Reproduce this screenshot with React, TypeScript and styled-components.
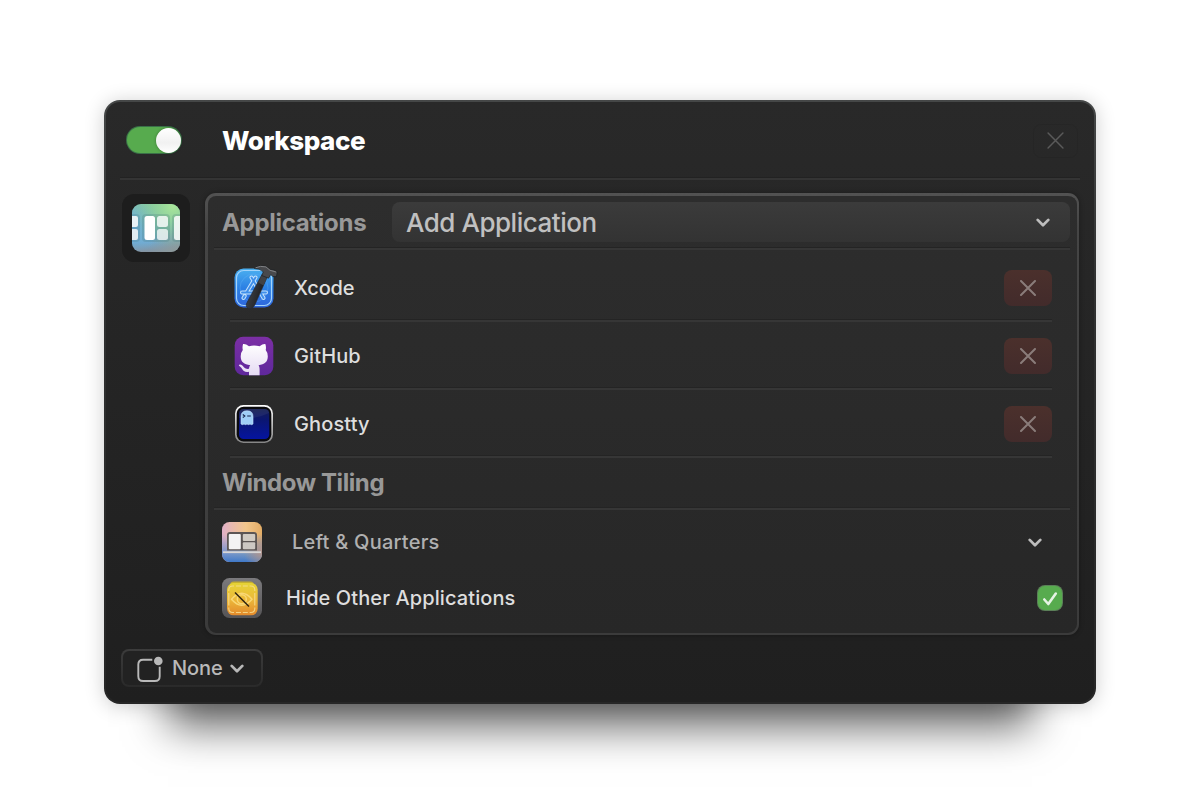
import React from 'react';
import styled, { createGlobalStyle } from 'styled-components';

const GlobalStyle = createGlobalStyle`
  *, *::before, *::after { box-sizing: border-box; }
  html, body { margin: 0; padding: 0; background: #fff; }
  body {
    font-family: Inter, 'Liberation Sans', sans-serif;
    -webkit-font-smoothing: antialiased;
  }
  button { font: inherit; border: 0; padding: 0; background: none; color: inherit; }
  svg { display: block; flex: none; }
`;

const Page = styled.main`
  height: 804px;
  padding: 100px 104px;
  overflow: hidden;
  background: #fff;
`;

const Window = styled.section`
  width: 992px;
  height: 604px;
  padding: 0 14px;
  display: flex;
  flex-direction: column;
  border: 2px solid transparent;
  border-radius: 16px;
  background:
    linear-gradient(#292929, #1f1f1f) padding-box,
    linear-gradient(#454747, #303131 30%, #262626) border-box;
  box-shadow:
    0 2px 20px rgba(0, 0, 0, 0.2),
    0 87px 40px -64px rgba(0, 0, 0, 0.6);
`;

const Header = styled.header`
  height: 78px;
  padding: 0 2px 0 7px;
  display: flex;
  align-items: center;
  border-bottom: 2px solid #343434;
  box-shadow: inset 0 -1px #222;
`;

const Switch = styled.button`
  width: 54px;
  height: 26px;
  display: flex;
  justify-content: flex-end;
  align-items: center;
  border-radius: 13px;
  background: #57ab4e;
  box-shadow: 0 0 0 1px #3a7048;
`;

const Knob = styled.span`
  width: 25px;
  height: 25px;
  border-radius: 50%;
  background: linear-gradient(#fff, #f1f1f1 60%, #fff);
  box-shadow: 0 0 3px rgba(0, 0, 0, 0.35);
`;

const Title = styled.h1`
  flex: 1;
  margin: 2px 0 0 41px;
  font-size: 26px;
  line-height: 32px;
  font-weight: 770;
  color: #fff;
  letter-spacing: -0.45px;
`;

const CloseButton = styled.button`
  width: 45px;
  height: 34px;
  margin-top: 1px;
  display: grid;
  place-items: center;
  border-radius: 8px;
  box-shadow: inset 0 0 0 1px rgba(0, 0, 0, 0.05);
`;

const Body = styled.div`
  display: flex;
  gap: 15px;
  padding: 13px 1px 0 2px;
`;

const Thumbnail = styled.div`
  width: 68px;
  height: 68px;
  margin-top: 1px;
  display: grid;
  place-items: center;
  border-radius: 12px;
  background: #1d1d1d;
`;

const Panel = styled.div`
  width: 874px;
  height: 442px;
  padding: 0 7px 0 6px;
  border: solid transparent;
  border-width: 3px 2px 2px 3px;
  border-radius: 11px;
  background:
    linear-gradient(#2d2d2d, #272727) padding-box,
    linear-gradient(#525252, #454545 8%, #3b3b3b) border-box;
  box-shadow: 0 0 5px rgba(0, 0, 0, 0.35);
`;

const PanelHeader = styled.div<{ $height: number }>`
  height: ${(p) => p.$height}px;
  padding-left: 8px;
  display: flex;
  align-items: center;
  border-bottom: 2px solid #363636;
  box-shadow: inset 0 -1px #242424;
`;

const Heading = styled.h2<{ $spacing: string; $top?: number }>`
  margin: ${(p) => p.$top ?? 0}px 0 0;
  font-size: 24px;
  line-height: 30px;
  font-weight: 650;
  color: #989898;
  letter-spacing: ${(p) => p.$spacing};
`;

const Select = styled.button`
  width: 678px;
  height: 40px;
  margin-left: auto;
  padding: 0 20px 0 14px;
  display: flex;
  align-items: center;
  justify-content: space-between;
  border-radius: 8px;
  background: linear-gradient(#3b3b3b, #333);
  font-size: 26px;
  font-weight: 450;
  letter-spacing: -0.47px;
  color: #c0c0c0;
`;

const AppList = styled.ul`
  margin: 4px 18px 0 16px;
  padding: 0;
  list-style: none;
`;

const AppRow = styled.li`
  height: 68px;
  padding-top: 2px;
  display: flex;
  align-items: center;
  gap: 16px;
  border-bottom: 2px solid #363636;
  box-shadow: inset 0 -1px #242424;
`;

const Label = styled.span<{ $color?: string; $spacing?: string }>`
  flex: 1;
  font-size: 20px;
  line-height: 26px;
  font-weight: 500;
  color: ${(p) => p.$color ?? '#dedede'};
  letter-spacing: ${(p) => p.$spacing ?? '0'};
`;

const RemoveButton = styled.button`
  width: 48px;
  height: 36px;
  display: grid;
  place-items: center;
  border-radius: 8px;
  background: linear-gradient(#4b302c, #422b2b);
`;

const Options = styled.div`
  padding: 4px 0 0 8px;
`;

const OptionRow = styled.div<{ $gap: number; $end: number }>`
  height: 56px;
  padding-right: ${(p) => p.$end}px;
  display: flex;
  align-items: center;
  gap: ${(p) => p.$gap}px;
`;

const Checkbox = styled.span`
  width: 24px;
  height: 24px;
  display: grid;
  place-items: center;
  border-radius: 7px;
  background: #57ab4e;
  box-shadow: 0 0 0 1px #5b7f58;
`;

const Shortcut = styled.button`
  width: 142px;
  height: 38px;
  margin: 14px 0 0 1px;
  padding: 0 17px 0 14px;
  display: flex;
  align-items: center;
  border: 2px solid transparent;
  border-radius: 8px;
  background:
    linear-gradient(#222, #222) padding-box,
    linear-gradient(#3c3c3c, #2a2a2a) border-box;
`;

const ShortcutText = styled.span`
  margin: 0 auto 0 9px;
  font-size: 20px;
  font-weight: 500;
  letter-spacing: -0.1px;
  color: #b9b9b9;
`;

const Chevron = ({ color = '#bdbdbd' }: { color?: string }) => (
  <svg width="14" height="10" viewBox="0 0 14 10">
    <path d="M1.7 2.9 7 8.2 12.3 2.9" fill="none" stroke={color} strokeWidth="2.7" strokeLinecap="round" strokeLinejoin="round" />
  </svg>
);

const Cross = ({ size, color, weight }: { size: number; color: string; weight: number }) => (
  <svg width={size} height={size} viewBox="0 0 16 16">
    <path d="M1 1 15 15M15 1 1 15" fill="none" stroke={color} strokeWidth={weight} strokeLinecap="round" />
  </svg>
);

const WorkspaceIcon = () => (
  <svg width="48" height="48" viewBox="0 0 48 48">
    <defs>
      <linearGradient id="wsBase" x1="0" y1="0" x2="0" y2="1">
        <stop offset="0" stopColor="#85c7a8" />
        <stop offset=".55" stopColor="#76b8bd" />
        <stop offset=".8" stopColor="#72abcf" />
        <stop offset="1" stopColor="#8593a0" />
      </linearGradient>
      <radialGradient id="wsGreen" cx=".85" cy=".05" r=".85">
        <stop offset="0" stopColor="#a9e69a" />
        <stop offset="1" stopColor="#83c98b" stopOpacity="0" />
      </radialGradient>
      <radialGradient id="wsBlue" cx="0" cy=".45" r=".6">
        <stop offset="0" stopColor="#6eaedb" />
        <stop offset="1" stopColor="#6eaedb" stopOpacity="0" />
      </radialGradient>
      <radialGradient id="wsGray" cx="1" cy="1" r=".65">
        <stop offset="0" stopColor="#8f9a98" />
        <stop offset="1" stopColor="#8f9a98" stopOpacity="0" />
      </radialGradient>
      <clipPath id="wsClip"><rect width="48" height="48" rx="9" /></clipPath>
    </defs>
    <g clipPath="url(#wsClip)">
      <rect width="48" height="48" fill="url(#wsBase)" />
      <rect width="48" height="48" fill="url(#wsBlue)" />
      <rect width="48" height="48" fill="url(#wsGray)" />
      <rect width="48" height="48" fill="url(#wsGreen)" />
      <g fill="#43707a" opacity=".22">
        <rect x="-10" y="10" width="18" height="28" rx="4" />
        <rect x="10" y="10" width="28" height="28" rx="4" />
        <rect x="40" y="10" width="18" height="28" rx="4" />
      </g>
      <g fill="#fff">
        <rect x="-6" y="12" width="12" height="11" rx="2" opacity=".85" />
        <rect x="-6" y="25" width="12" height="11" rx="2" opacity=".8" />
        <rect x="12.5" y="12" width="10.5" height="24" rx="2.5" />
        <rect x="25" y="12" width="11" height="11" rx="2.5" opacity=".8" />
        <rect x="25" y="25" width="11" height="11" rx="2.5" opacity=".75" />
        <rect x="42" y="12" width="12" height="24" rx="2.5" opacity=".85" />
      </g>
    </g>
  </svg>
);

const XcodeIcon = () => (
  <svg width="48" height="48" viewBox="0 0 48 48">
    <defs>
      <linearGradient id="xcBase" x1="0" y1="0" x2="0" y2="1">
        <stop offset="0" stopColor="#4bb0f0" />
        <stop offset=".5" stopColor="#2b80e4" />
        <stop offset="1" stopColor="#2f66dc" />
      </linearGradient>
      <linearGradient id="xcHandle" x1="0" y1="0" x2="1" y2=".4">
        <stop offset="0" stopColor="#4a4d52" />
        <stop offset="1" stopColor="#17181a" />
      </linearGradient>
    </defs>
    <rect x="4.5" y="4.5" width="39" height="39" rx="9" fill="url(#xcBase)" />
    <rect x="6.5" y="6.5" width="35" height="35" rx="7.2" fill="none" stroke="#a3d4fb" strokeWidth="1.2" />
    <circle cx="24" cy="24" r="14" fill="none" stroke="#68b7f8" strokeWidth=".6" opacity=".6" />
    <g fill="none" strokeLinecap="round" strokeLinejoin="round">
      <g stroke="#c3e1fc" strokeWidth="4">
        <path d="M21.5 13.5 33.5 34M25.5 13.5 16.5 28.5M12 28.5H36M13.5 34 14.7 32" />
      </g>
      <g stroke="#3f8fea" strokeWidth="1.9">
        <path d="M21.5 13.5 33.5 34M25.5 13.5 16.5 28.5M12 28.5H36M13.5 34 14.7 32" />
      </g>
    </g>
    <path d="M32 10.5 37.3 12.8 25 40.5Q22.5 46 18.3 44.4 14.8 42.5 17.3 38Z" fill="url(#xcHandle)" stroke="#232a36" strokeWidth=".7" />
    <path d="M32 10.5 37.3 12.8 33.5 21.5 28.4 18.5Z" fill="#404245" />
    <path d="M24.5 4.5Q28 .8 36 2.2L40.5 5.8 43 5.5 47.5 7.8 46.3 12.6 42.8 12.6 40.8 10.5 38.5 14.2 31.8 11.5 33.3 7.8Q29.5 4.3 24.5 4.5Z" fill="#48494c" stroke="#1d1f22" strokeWidth=".7" />
    <path d="M25.5 3.8Q30 1.4 36 2.9L40 6.3 46 8" fill="none" stroke="#88898c" strokeWidth=".9" />
  </svg>
);

const GitHubIcon = () => (
  <svg width="48" height="48" viewBox="0 0 48 48">
    <defs>
      <linearGradient id="ghBase" x1="0" y1="0" x2="0" y2="1">
        <stop offset="0" stopColor="#7c2fa5" />
        <stop offset="1" stopColor="#5f289c" />
      </linearGradient>
      <linearGradient id="ghCat" x1="0" y1="0" x2="0" y2="1">
        <stop offset="0" stopColor="#fff" />
        <stop offset="1" stopColor="#e5daf3" />
      </linearGradient>
    </defs>
    <rect x="4.7" y="4.7" width="38.6" height="38.6" rx="8.5" fill="url(#ghBase)" />
    <path
      d="M13.1 12Q15.6 11.6 19 14.2 24 12.9 29.6 14.2 33 11.6 35.3 12 36.4 15 35.7 18 37.8 20.6 37.8 24.2C37.8 30 34.5 32.3 28.6 33.2Q29.6 34.7 29.6 37V43.3H19V39.8C15 40.5 13.2 39 12 36.8 11.2 35.2 10 34.2 8.8 33.4 9 32.2 11 32.5 12 33.2 13.8 34.6 14.5 37.4 19 36.8Q19.1 34.3 20.2 33.2C14 32.3 10.7 30 10.7 24.2Q10.7 20.6 12.8 18 12.1 14.8 13.1 12Z"
      fill="url(#ghCat)"
    />
  </svg>
);

const GhosttyIcon = () => (
  <svg width="48" height="48" viewBox="0 0 48 48">
    <defs>
      <linearGradient id="gtRim" x1="0" y1="0" x2="0" y2="1">
        <stop offset="0" stopColor="#fff" />
        <stop offset=".45" stopColor="#c4c4c4" />
        <stop offset="1" stopColor="#858585" />
      </linearGradient>
      <linearGradient id="gtScreen" x1="0" y1="0" x2="0" y2="1">
        <stop offset="0" stopColor="#161f54" />
        <stop offset=".35" stopColor="#0b1670" />
        <stop offset="1" stopColor="#0514a0" />
      </linearGradient>
    </defs>
    <rect x="5" y="5" width="38" height="38" rx="8.5" fill="url(#gtRim)" />
    <rect x="6.7" y="6.7" width="34.6" height="34.8" rx="7" fill="#0a0a0d" />
    <rect x="9" y="9" width="30.3" height="30" rx="4.5" fill="url(#gtScreen)" />
    <path d="M9 18Q25 20 39 13V12.5Q38 9 34.5 9H13.5Q9 9 9 13.5Z" fill="#fff" opacity=".06" />
    <path d="M11 16.5Q11 10.8 17 10.8T23 16.5V24Q21.5 25.3 20 24 18.5 25.3 17 24 15.5 25.3 14 24 12.5 25.3 11 24Z" fill="#9fcef7" stroke="#c4e2fb" strokeWidth=".6" />
    <path d="M12.8 14.5 14.8 16 12.8 17.5M17.2 16H20.8" fill="none" stroke="#16224a" strokeWidth="1.1" />
  </svg>
);

const TilingIcon = () => (
  <svg width="40" height="40" viewBox="0 0 40 40">
    <defs>
      <linearGradient id="tlBase" x1="0" y1="0" x2="1" y2="0">
        <stop offset="0" stopColor="#e0b0c8" />
        <stop offset=".6" stopColor="#f2c68b" />
        <stop offset="1" stopColor="#e3ac65" />
      </linearGradient>
      <linearGradient id="tlFloor" x1="0" y1="0" x2="0" y2="1">
        <stop offset=".3" stopColor="#6f8fd0" stopOpacity="0" />
        <stop offset=".75" stopColor="#5b8fd0" stopOpacity=".75" />
        <stop offset="1" stopColor="#3f78c8" />
      </linearGradient>
      <radialGradient id="tlCorner" cx="1" cy=".75" r=".45">
        <stop offset="0" stopColor="#b3958c" />
        <stop offset="1" stopColor="#b3958c" stopOpacity="0" />
      </radialGradient>
    </defs>
    <rect width="40" height="40" rx="7.5" fill="url(#tlBase)" />
    <rect width="40" height="40" rx="7.5" fill="url(#tlFloor)" />
    <rect width="40" height="40" rx="7.5" fill="url(#tlCorner)" />
    <path d="M5 28.5V13Q5 10 8 10H32Q35 10 35 13V28.5Z" fill="#5c5655" />
    <rect x="6.8" y="12" width="12" height="15.2" rx="1" fill="#f3f3f3" />
    <rect x="20.8" y="12" width="12.4" height="6.9" rx="1" fill="#d1cbc3" />
    <rect x="20.8" y="20.3" width="12.4" height="6.9" rx="1" fill="#cdc8c3" />
    <rect x="1" y="29.3" width="38" height="1.8" fill="#d8d6d6" />
  </svg>
);

const HideIcon = () => (
  <svg width="40" height="40" viewBox="0 0 40 40">
    <defs>
      <linearGradient id="hdFrame" x1="0" y1="0" x2="0" y2="1">
        <stop offset="0" stopColor="#7b7a7d" />
        <stop offset="1" stopColor="#555456" />
      </linearGradient>
      <linearGradient id="hdBase" x1="0" y1="0" x2="0" y2="1">
        <stop offset="0" stopColor="#e5d335" />
        <stop offset=".5" stopColor="#ecb93a" />
        <stop offset="1" stopColor="#e38a2c" />
      </linearGradient>
    </defs>
    <rect width="40" height="40" rx="7.5" fill="url(#hdFrame)" />
    <rect x="8" y="3.5" width="24" height="10" rx="4" fill="#c6b02f" />
    <rect x="5" y="5" width="30.7" height="32.3" rx="6.5" fill="url(#hdBase)" />
    <g fill="none" stroke="#f8df94" strokeWidth="1.1" opacity=".85">
      <path d="M6.8 13V12Q6.8 8 10.8 8H12M27.6 8H28.8Q32.8 8 32.8 12V13M32.8 29.5V30.5Q32.8 34.5 28.8 34.5H27.6M12 34.5H10.8Q6.8 34.5 6.8 30.5V29.5" />
      <path d="M14 8H19M20.8 8H25.8M14 34.5H19M20.8 34.5H25.8M6.8 15V27.5M32.8 15V27.5" />
    </g>
    <path d="M9.5 21.3Q19.8 9.3 30 21.3 19.8 33.3 9.5 21.3Z" fill="none" stroke="#f9d875" strokeWidth="1.5" strokeLinejoin="round" />
    <circle cx="19.8" cy="21.3" r="4.5" fill="none" stroke="#f9d875" strokeWidth="1.5" />
    <path d="M13 14.5 27 28.5" stroke="#30230d" strokeWidth="1.5" />
  </svg>
);

const BadgeIcon = () => (
  <svg width="26" height="28" viewBox="0 0 26 28">
    <path d="M15.3 5.7H6.1Q1.3 5.7 1.3 10.5V22.2Q1.3 27 6.1 27H17.9Q22.7 27 22.7 22.2V12.7" fill="none" stroke="#b9b9b9" strokeWidth="1.9" />
    <circle cx="21.3" cy="7" r="4.3" fill="#b9b9b9" />
  </svg>
);

const Check = () => (
  <svg width="18" height="18" viewBox="0 0 18 18">
    <path d="M3.3 10.5 7.3 15 14.8 4.6" fill="none" stroke="#e6f3e4" strokeWidth="2.6" strokeLinecap="round" strokeLinejoin="round" />
  </svg>
);

const apps = [
  { name: 'Xcode', icon: <XcodeIcon />, spacing: '-0.15px' },
  { name: 'GitHub', icon: <GitHubIcon />, spacing: '0.12px' },
  { name: 'Ghostty', icon: <GhosttyIcon />, spacing: '0.12px' },
];

export default function App() {
  return (
    <>
      <GlobalStyle />
      <Page>
        <Window>
          <Header>
            <Switch aria-label="Enabled"><Knob /></Switch>
            <Title>Workspace</Title>
            <CloseButton aria-label="Close"><Cross size={17} color="#5a5a5a" weight={1.4} /></CloseButton>
          </Header>
          <Body>
            <Thumbnail><WorkspaceIcon /></Thumbnail>
            <Panel>
              <PanelHeader $height={54}>
                <Heading $spacing="-0.3px" $top={2}>Applications</Heading>
                <Select><span>Add Application</span><Chevron /></Select>
              </PanelHeader>
              <AppList>
                {apps.map((app) => (
                  <AppRow key={app.name}>
                    {app.icon}
                    <Label $spacing={app.spacing}>{app.name}</Label>
                    <RemoveButton aria-label="Remove"><Cross size={16} color="#8a7c7a" weight={2} /></RemoveButton>
                  </AppRow>
                ))}
              </AppList>
              <PanelHeader $height={52}>
                <Heading $spacing="-0.42px">Window Tiling</Heading>
              </PanelHeader>
              <Options>
                <OptionRow $gap={30} $end={28}>
                  <TilingIcon />
                  <Label $color="#b0b0b0" $spacing="0.23px">Left &amp; Quarters</Label>
                  <Chevron />
                </OptionRow>
                <OptionRow $gap={24} $end={8}>
                  <HideIcon />
                  <Label $spacing="0.1px">Hide Other Applications</Label>
                  <Checkbox><Check /></Checkbox>
                </OptionRow>
              </Options>
            </Panel>
          </Body>
          <Shortcut>
            <BadgeIcon />
            <ShortcutText>None</ShortcutText>
            <Chevron color="#b9b9b9" />
          </Shortcut>
        </Window>
      </Page>
    </>
  );
}
